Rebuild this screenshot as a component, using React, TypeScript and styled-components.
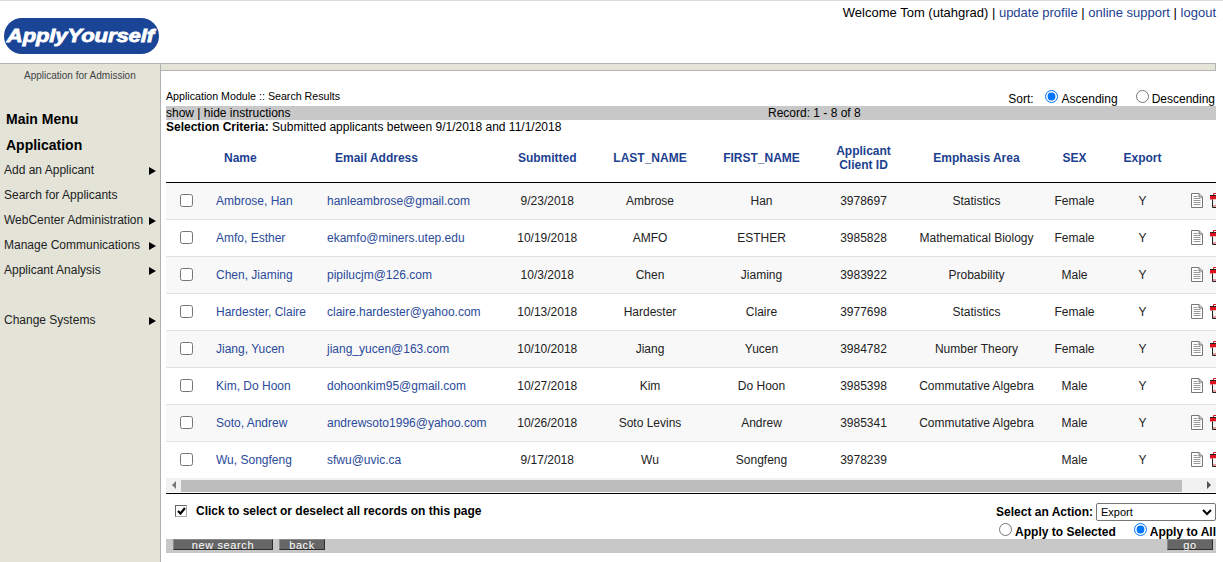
import React from "react";
import styled, { createGlobalStyle } from "styled-components";

const Global = createGlobalStyle`
  html, body { margin: 0; padding: 0; background: #fff; overflow: hidden; }
  body { font-family: "Liberation Sans", Arial, sans-serif; color: #000; font-size: 12px; }
`;

const Page = styled.div`width: 1223px; height: 562px; overflow: hidden; background: #fff; border-top: 1px solid #dcdcdc; box-sizing: border-box;`;
const Header = styled.header`display: flex; justify-content: space-between; align-items: flex-start; width: 1216px; height: 62px;`;
const Logo = styled.div`
  margin: 17px 0 0 4px; width: 155px; height: 36px; border-radius: 18px; background: #1a4596; padding-right: 3px; box-sizing: border-box;
  display: flex; align-items: center; justify-content: center;
  color: #fff; font: italic 900 19px "Liberation Sans", Arial, sans-serif; letter-spacing: -0.1px;
  -webkit-text-stroke: 0.8px #fff; white-space: nowrap;
`;
const LogoWord = styled.span`display: inline-block; transform: scaleX(1.16);`;
const Welcome = styled.div`margin-top: 4px; font-size: 13px; line-height: 15px; white-space: nowrap;`;
const TopLink = styled.a`color: #1c3f8f; text-decoration: none;`;

const Frame = styled.div`display: grid; grid-template-columns: 160px 1056px; width: 1216px; height: 500px; border-top: 1px solid #b4b4b4;`;
const Sidebar = styled.nav`background: #e3e3d8; height: 500px; display: flex; flex-direction: column;`;
const SideTitle = styled.div`font-size: 10px; line-height: 12px; color: #444; padding: 6px 0 0 24px; height: 24px; box-sizing: content-box; margin-bottom: -1px;`;
const SideHeading = styled.div<{ $top: number }>`font-size: 14px; font-weight: bold; line-height: 18px; padding-left: 6px; margin-top: ${p => p.$top}px;`;
const SideMenu = styled.div`display: flex; flex-direction: column; margin-top: 3px;`;
const SideItem = styled.div<{ $gap?: number }>`
  display: flex; justify-content: space-between; align-items: center; height: 25px; padding: 0 4px 0 4px;
  font-size: 12px; color: #222; margin-top: ${p => p.$gap ?? 0}px;
`;
const Arrow = styled.span<{ $hidden?: boolean }>`
  width: 0; height: 0; border-left: 7px solid #000; border-top: 4px solid transparent; border-bottom: 4px solid transparent;
  margin-top: 2px; visibility: ${p => (p.$hidden ? "hidden" : "visible")};
`;

const Main = styled.main`border-left: 1px solid #b0b0b0; min-width: 0;`;
const Band = styled.div`height: 6px; background: #e3e3d8; border-bottom: 1px solid #b4b4b4; border-right: 1px solid #b4b4b4;`;
const Content = styled.div`padding: 0 0 0 5px; width: 1050px;`;
const TopRow = styled.div`display: flex; justify-content: space-between; height: 35px; align-items: flex-end;`;
const Crumb = styled.div`font-size: 8pt; line-height: 13px; padding-bottom: 3px;`;
const Sort = styled.div`display: flex; align-items: center; font-size: 12px; line-height: 14px; height: 18px; white-space: nowrap; margin: 0 1px -2px 0;`;
const SortLabel = styled.span`margin-right: 11px;`;
const Radio = styled.input.attrs({ type: "radio" })`margin: 0 3px 6px 0; width: 13px; height: 13px;`;
const SortOpt = styled.label`
  display: flex; align-items: center;
  &:first-of-type input { margin-right: 4px; }
  & + & { margin-left: 18px; }
`;
const InfoBar = styled.div`display: grid; grid-template-columns: 602px 1fr; background: #c8c8c8; height: 14px; line-height: 14px; font-size: 12px;`;
const Criteria = styled.div`font-size: 12px; line-height: 14px;`;
const B = styled.b`font-weight: bold;`;

const cols = "40px 111px 177px 106.5px 99px 124px 80px 146px 50px 86px 1fr";
const TableHead = styled.div`
  display: grid; grid-template-columns: ${cols}; height: 48px; align-items: center; border-bottom: 1px solid #000;
  color: #1c3f8f; font-weight: bold; font-size: 12px; line-height: 14px; text-align: center;
`;
const HeadLeft = styled.div`text-align: left; padding-left: 18px;`;
const Row = styled.div<{ $odd: boolean }>`
  display: grid; grid-template-columns: ${cols}; height: 36px; align-items: center; text-align: center;
  border-bottom: 1px solid #e2e2e2; background: ${p => (p.$odd ? "#f8f8f8" : "#fff")};
  font-size: 12px; color: #222; overflow: hidden;
`;
const LastRow = styled(Row)`border-bottom: 0;`;
const CheckCell = styled.div`display: flex; justify-content: center; align-items: center;`;
const Box = styled.input.attrs({ type: "checkbox" })`margin: 0 0 2px; width: 13px; height: 13px;`;
const LinkCell = styled.a`text-align: left; padding-left: 10px; color: #2a4a9a; text-decoration: none; white-space: nowrap;`;
const Plain = styled.div`white-space: nowrap;`;
const Icons = styled.div`display: flex; align-items: center; gap: 7px; padding: 0 0 1px 5px; width: 40px; overflow: hidden;`;

const Scroll = styled.div`display: flex; align-items: center; height: 14px; background: #f1f1f1;`;
const ScrollBtn = styled.div`width: 15px; display: flex; justify-content: center; flex: none;`;
const TriL = styled.span`width: 0; height: 0; border-right: 4px solid #777; border-top: 4px solid transparent; border-bottom: 4px solid transparent;`;
const TriR = styled.span`width: 0; height: 0; border-left: 4px solid #505050; border-top: 4px solid transparent; border-bottom: 4px solid transparent;`;
const Thumb = styled.div`width: 1001px; height: 12px; background: #bdbdbd; margin-top: 1px;`;
const Spacer = styled.div`flex: 1;`;
const Rule = styled.div`height: 1px; background: #000; margin-top: 1px;`;

const Actions = styled.div`display: flex; justify-content: space-between; height: 45px;`;
const SelectAll = styled.div`display: flex; align-items: center; height: 14px; margin-top: 10px; padding-left: 9px; font-weight: bold; font-size: 12px;`;
const Tick = styled.span`width: 10px; height: 10px; border: 1px solid #666; border-right-color: #aaa; border-bottom-color: #aaa; display: flex; align-items: center; justify-content: center; background: #fff; margin-right: 9px;`;
const ActionSide = styled.div`display: flex; flex-direction: column; align-items: flex-end; font-weight: bold; font-size: 12px; white-space: nowrap;`;
const ActionLine = styled.div`display: flex; align-items: center; margin-top: 9px; height: 18px;`;
const ActionSelect = styled.select`
  width: 120px; height: 18px; margin: 0 0 0 3px; padding: 0; font: 11px "Liberation Sans", Arial, sans-serif; background: #fff;
  border: 1px solid #767676; border-radius: 2px; color: #000;
`;
const ApplyLine = styled.div`display: flex; align-items: center; height: 18px; margin-top: 2px;`;
const ApplyOpt = styled.label`display: flex; align-items: center; & + & { margin-left: 18px; }`;
const ApplyRadio = styled(Radio)`margin: 0 3px 4px 0;`;

const Foot = styled.div`display: flex; justify-content: space-between; align-items: flex-start; background: #c8c8c8; height: 14px; padding: 0 3px 0 7px; box-sizing: border-box;`;
const FootLeft = styled.div`display: flex; gap: 6px;`;
const Btn = styled.button<{ $w: number }>`
  width: ${p => p.$w}px; height: 11px; padding: 0; border: 0; border-top: 1px solid #8a8a8a; border-bottom: 1px solid #2e2e2e; border-right: 1px solid #2e2e2e; border-left: 1px solid #8a8a8a;
  box-sizing: border-box; background: #666; color: #fff; font: 11px/8px "Liberation Sans", Arial, sans-serif; letter-spacing: 0.6px; text-align: center;
`;

const DocIcon = () => (
  <svg width="12" height="15" viewBox="0 0 12 15" style={{ flex: "none" }}>
    <path d="M.5.5H8L11.5 4V14.5H.5Z" fill="#fff" stroke="#777" />
    <path d="M8 .5V4H11.5" fill="#ccc" stroke="#777" />
    <path d="M2.5 3.5H6.5M2.5 5.5H9.5M2.5 7.5H9.5M2.5 9.5H9.5M2.5 11.5H9.5" stroke="#999" />
  </svg>
);
const TrashIcon = () => (
  <svg width="12" height="15" viewBox="0 0 12 15" style={{ flex: "none" }}>
    <path d="M3.5 2.5V.5H8V2.5" stroke="#d8101c" fill="none" />
    <path d="M0 2.5H11.5V6.5H0Z" fill="#e0101c" />
    <path d="M0 2.5H11.5" stroke="#222" />
    <path d="M2.5 6.5V14.5H9.5V6.5" fill="#f4f4f4" stroke="#222" />
    <path d="M3 12H9V14H3Z" fill="#e89aa0" />
  </svg>
);

const rows = [
  ["Ambrose, Han", "hanleambrose@gmail.com", "9/23/2018", "Ambrose", "Han", "3978697", "Statistics", "Female", "Y"],
  ["Amfo, Esther", "ekamfo@miners.utep.edu", "10/19/2018", "AMFO", "ESTHER", "3985828", "Mathematical Biology", "Female", "Y"],
  ["Chen, Jiaming", "pipilucjm@126.com", "10/3/2018", "Chen", "Jiaming", "3983922", "Probability", "Male", "Y"],
  ["Hardester, Claire", "claire.hardester@yahoo.com", "10/13/2018", "Hardester", "Claire", "3977698", "Statistics", "Female", "Y"],
  ["Jiang, Yucen", "jiang_yucen@163.com", "10/10/2018", "Jiang", "Yucen", "3984782", "Number Theory", "Female", "Y"],
  ["Kim, Do Hoon", "dohoonkim95@gmail.com", "10/27/2018", "Kim", "Do Hoon", "3985398", "Commutative Algebra", "Male", "Y"],
  ["Soto, Andrew", "andrewsoto1996@yahoo.com", "10/26/2018", "Soto Levins", "Andrew", "3985341", "Commutative Algebra", "Male", "Y"],
  ["Wu, Songfeng", "sfwu@uvic.ca", "9/17/2018", "Wu", "Songfeng", "3978239", "", "Male", "Y"],
];
const menu = ["Add an Applicant", "Search for Applicants", "WebCenter Administration", "Manage Communications", "Applicant Analysis"];

export default function App() {
  return (
    <Page>
      <Global />
      <Header>
        <Logo><LogoWord>ApplyYourself</LogoWord></Logo>
        <Welcome>
          Welcome Tom (utahgrad) | <TopLink href="#">update profile</TopLink> | <TopLink href="#">online support</TopLink> | <TopLink href="#">logout</TopLink>
        </Welcome>
      </Header>
      <Frame>
        <Sidebar>
          <SideTitle>Application for Admission</SideTitle>
          <SideHeading $top={17}>Main Menu</SideHeading>
          <SideHeading $top={8}>Application</SideHeading>
          <SideMenu>
            {menu.map((m, i) => (
              <SideItem key={m}>
                {m}
                <Arrow $hidden={i === 1} />
              </SideItem>
            ))}
          </SideMenu>
          <SideItem $gap={25}>
            Change Systems
            <Arrow />
          </SideItem>
        </Sidebar>
        <Main>
          <Band />
          <Content>
            <TopRow>
              <Crumb>Application Module :: Search Results</Crumb>
              <Sort>
                <SortLabel>Sort:</SortLabel>
                <SortOpt><Radio name="sort" defaultChecked />Ascending</SortOpt>
                <SortOpt><Radio name="sort" />Descending</SortOpt>
              </Sort>
            </TopRow>
            <InfoBar>
              <span>show | hide instructions</span>
              <span>Record: 1 - 8 of 8</span>
            </InfoBar>
            <Criteria><B>Selection Criteria:</B> Submitted applicants between 9/1/2018 and 11/1/2018</Criteria>
            <TableHead>
              <div />
              <HeadLeft>Name</HeadLeft>
              <HeadLeft>Email Address</HeadLeft>
              <div>Submitted</div>
              <div>LAST_NAME</div>
              <div>FIRST_NAME</div>
              <div>Applicant<br />Client ID</div>
              <div>Emphasis Area</div>
              <div>SEX</div>
              <div>Export</div>
              <div />
            </TableHead>
            {rows.map((r, i) => {
              const R = i === rows.length - 1 ? LastRow : Row;
              return (
                <R key={r[0]} $odd={i % 2 === 0}>
                  <CheckCell><Box /></CheckCell>
                  <LinkCell href="#">{r[0]}</LinkCell>
                  <LinkCell href="#">{r[1]}</LinkCell>
                  {r.slice(2).map((c, j) => <Plain key={j}>{c}</Plain>)}
                  <Icons><DocIcon /><TrashIcon /></Icons>
                </R>
              );
            })}
            <Scroll>
              <ScrollBtn><TriL /></ScrollBtn>
              <Thumb />
              <Spacer />
              <ScrollBtn><TriR /></ScrollBtn>
            </Scroll>
            <Rule />
            <Actions>
              <SelectAll>
                <Tick>
                  <svg width="9" height="8" viewBox="0 0 9 8"><path d="M1 4L3.5 6.5L8 1" fill="none" stroke="#000" strokeWidth="2.2" /></svg>
                </Tick>
                Click to select or deselect all records on this page
              </SelectAll>
              <ActionSide>
                <ActionLine>
                  Select an Action:
                  <ActionSelect defaultValue="Export"><option>Export</option></ActionSelect>
                </ActionLine>
                <ApplyLine>
                  <ApplyOpt><ApplyRadio name="apply" />Apply to Selected</ApplyOpt>
                  <ApplyOpt><ApplyRadio name="apply" defaultChecked />Apply to All</ApplyOpt>
                </ApplyLine>
              </ActionSide>
            </Actions>
            <Foot>
              <FootLeft>
                <Btn $w={100}>new search</Btn>
                <Btn $w={46}>back</Btn>
              </FootLeft>
              <Btn $w={46}>go</Btn>
            </Foot>
          </Content>
        </Main>
      </Frame>
    </Page>
  );
}
